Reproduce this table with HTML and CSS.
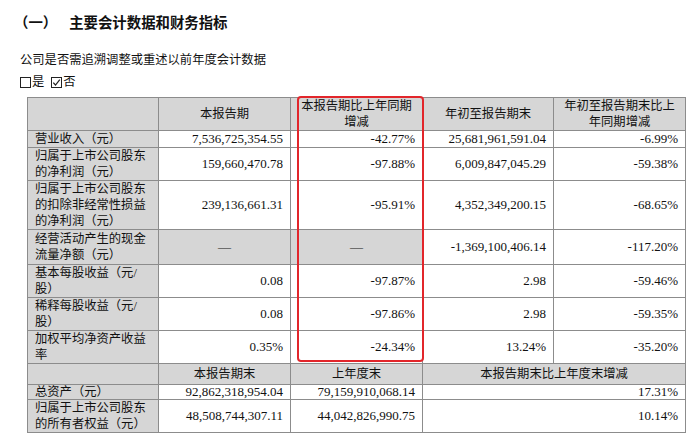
FILE: index.html
```html
<!DOCTYPE html>
<html lang="zh-CN">
<head>
<meta charset="utf-8">
<title>主要会计数据和财务指标</title>
<link rel="stylesheet" href="styles.css">
</head>
<body>
<h1 class="title"><span class="sec">（一）</span><span class="sec-name">主要会计数据和财务指标</span></h1>
<p class="note">公司是否需追溯调整或重述以前年度会计数据</p>
<p class="choice"><svg class="box" viewBox="0 0 11 11" width="11" height="11"><rect x="0.5" y="0.5" width="10" height="10" fill="none" stroke="#222" stroke-width="1"/></svg>是<svg class="box box-yes" viewBox="0 0 11 11" width="11" height="11"><rect x="0.5" y="0.5" width="10" height="10" fill="none" stroke="#222" stroke-width="1"/><path d="M2.3 5.6 L4.5 8 L8.8 2.6" fill="none" stroke="#222" stroke-width="1.2"/></svg>否</p>
<div class="table-wrap">
<table class="fin">
<colgroup><col class="c1"><col class="c2"><col class="c3"><col class="c4"><col class="c5"></colgroup>
<tr class="h33 head">
<td class="lab"></td>
<td class="ctr">本报告期</td>
<td class="ctr">本报告期比上年同期<br>增减</td>
<td class="ctr">年初至报告期末</td>
<td class="ctr">年初至报告期末比上<br>年同期增减</td>
</tr>
<tr class="h17">
<td class="lab">营业收入（元）</td>
<td class="num">7,536,725,354.55</td>
<td class="num">-42.77%</td>
<td class="num">25,681,961,591.04</td>
<td class="num">-6.99%</td>
</tr>
<tr class="h33">
<td class="lab">归属于上市公司股东<br>的净利润（元）</td>
<td class="num">159,660,470.78</td>
<td class="num">-97.88%</td>
<td class="num">6,009,847,045.29</td>
<td class="num">-59.38%</td>
</tr>
<tr class="h48">
<td class="lab">归属于上市公司股东<br>的扣除非经常性损益<br>的净利润（元）</td>
<td class="num">239,136,661.31</td>
<td class="num">-95.91%</td>
<td class="num">4,352,349,200.15</td>
<td class="num">-68.65%</td>
</tr>
<tr class="h35">
<td class="lab">经营活动产生的现金<br>流量净额（元）</td>
<td class="dash grey">—</td>
<td class="dash grey">—</td>
<td class="num">-1,369,100,406.14</td>
<td class="num">-117.20%</td>
</tr>
<tr class="h32">
<td class="lab">基本每股收益（元/<br>股）</td>
<td class="num">0.08</td>
<td class="num">-97.87%</td>
<td class="num">2.98</td>
<td class="num">-59.46%</td>
</tr>
<tr class="h33">
<td class="lab">稀释每股收益（元/<br>股）</td>
<td class="num">0.08</td>
<td class="num">-97.86%</td>
<td class="num">2.98</td>
<td class="num">-59.35%</td>
</tr>
<tr class="h33">
<td class="lab">加权平均净资产收益<br>率</td>
<td class="num">0.35%</td>
<td class="num">-24.34%</td>
<td class="num">13.24%</td>
<td class="num">-35.20%</td>
</tr>
<tr class="h21 head">
<td class="lab"></td>
<td class="ctr">本报告期末</td>
<td class="ctr">上年度末</td>
<td class="ctr" colspan="2">本报告期末比上年度末增减</td>
</tr>
<tr class="h15">
<td class="lab">总资产（元）</td>
<td class="num">92,862,318,954.04</td>
<td class="num">79,159,910,068.14</td>
<td class="num" colspan="2">17.31%</td>
</tr>
<tr class="h32b">
<td class="lab">归属于上市公司股东<br>的所有者权益（元）</td>
<td class="num">48,508,744,307.11</td>
<td class="num">44,042,826,990.75</td>
<td class="num" colspan="2">10.14%</td>
</tr>
</table>
<div class="highlight"></div>
</div>
</body>
</html>
```
FILE: styles.css
```css
html, body {
  margin: 0;
  padding: 0;
  background: #ffffff;
}
body {
  font-family: "Liberation Serif", "Noto Sans CJK SC", serif;
  color: #111111;
  width: 700px;
  height: 447px;
  overflow: hidden;
}
.title {
  margin: 0;
  padding: 12px 0 0 14px;
  font-family: "Noto Sans CJK SC", sans-serif;
  font-size: 14.4px;
  line-height: 20px;
  font-weight: 700;
  color: #111;
}
.title .sec-name {
  margin-left: 12px;
}
.note {
  margin: 20px 0 0 20px;
  font-size: 12.3px;
  line-height: 16px;
}
.choice {
  margin: 6px 0 0 20px;
  font-size: 12.3px;
  line-height: 16px;
  display: flex;
  align-items: center;
}
.choice .box {
  margin-right: 1px;
}
.choice .box-yes {
  margin-left: 7px;
}
.table-wrap {
  position: relative;
  margin: 7px 0 0 27px;
  width: 658px;
}
.fin {
  border-collapse: collapse;
  table-layout: fixed;
  width: 658px;
}
.c1 { width: 131px; }
.c2 { width: 132px; }
.c3 { width: 132px; }
.c4 { width: 131px; }
.c5 { width: 132px; }
.fin td {
  border: 1px solid #8c8c8c;
  padding: 0;
  line-height: 16px;
  vertical-align: middle;
}
.fin .lab {
  background: #d6d6d6;
  font-size: 12.3px;
  padding-left: 7px;
  text-align: left;
}
.fin .head td {
  background: #d6d6d6;
}
.fin .ctr {
  text-align: center;
  font-size: 12.3px;
}
.fin .num {
  text-align: right;
  font-size: 13px;
  padding-right: 7px;
}
.fin .dash {
  text-align: center;
  font-size: 13px;
}
.fin .grey {
  background: #d6d6d6;
}
.h15 td { height: 14px; line-height: 14px; }
.h17 td { height: 16px; }
.h21 td { height: 20px; }
.h32 td { height: 31px; }
.h32b td { height: 31px; }
.h33 td { height: 32px; }
.h35 td { height: 34px; }
.h48 td { height: 47px; }
.highlight {
  position: absolute;
  left: 270px;
  top: -1px;
  width: 123px;
  height: 262px;
  border: 2px solid #e2262b;
  border-radius: 4px;
  pointer-events: none;
}
```
